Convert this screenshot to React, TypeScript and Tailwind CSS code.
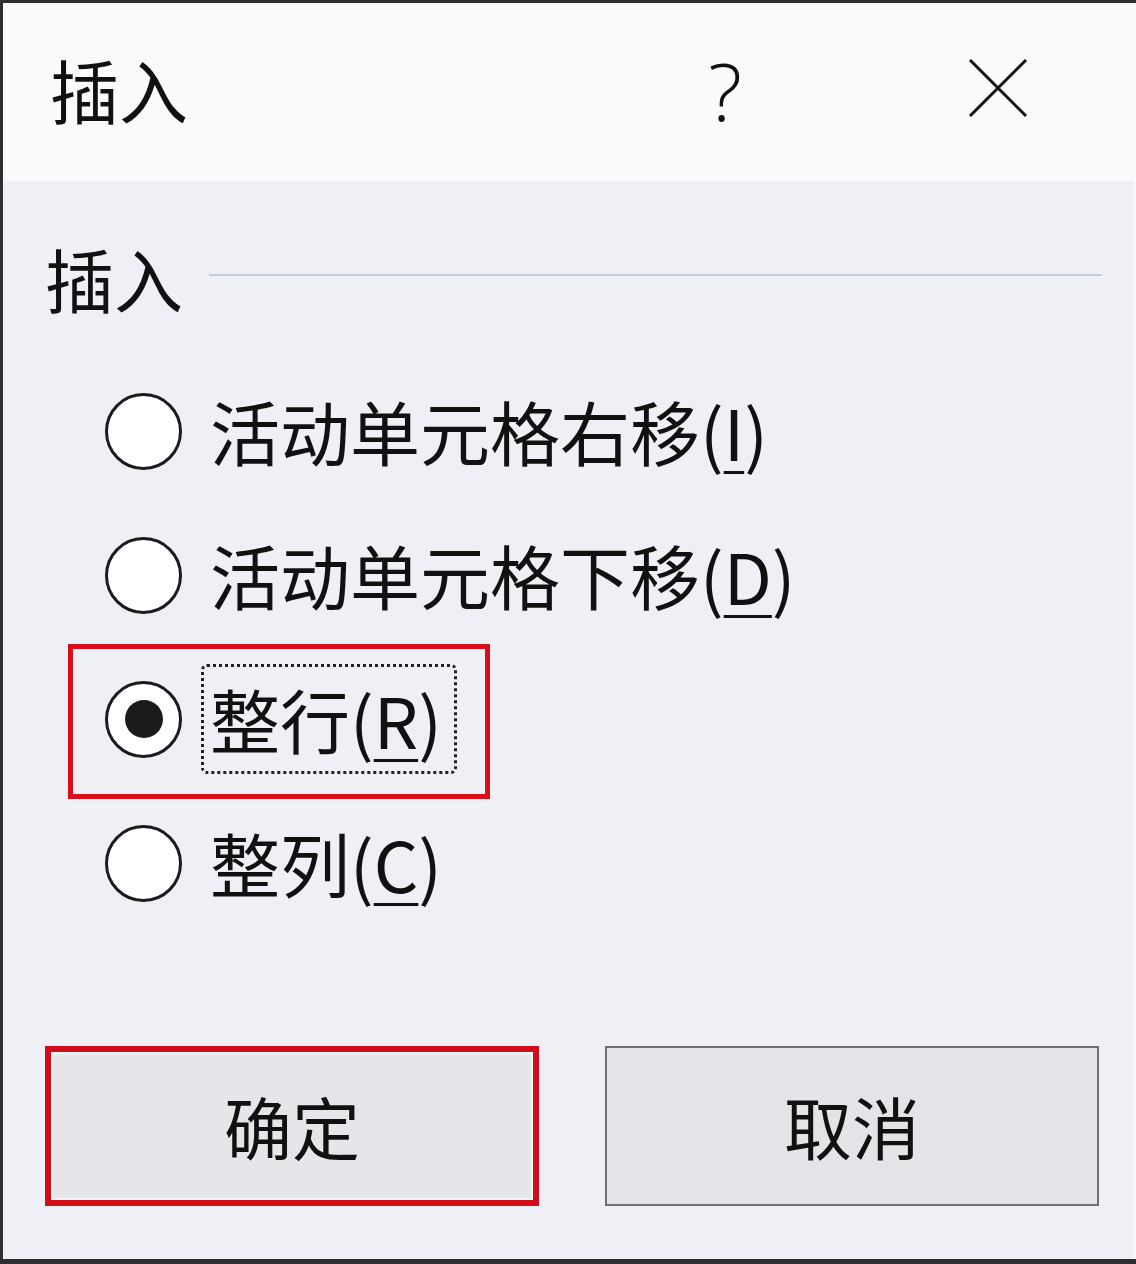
import React from 'react';

const font = { fontFamily: '"Noto Sans CJK SC", "Noto Sans", sans-serif' };

type Opt = { label: string; key: string; checked?: boolean; focused?: boolean };

const options: Opt[] = [
  { label: '活动单元格右移', key: 'I' },
  { label: '活动单元格下移', key: 'D' },
  { label: '整行', key: 'R', checked: true, focused: true },
  { label: '整列', key: 'C' },
];

function Radio({ checked }: { checked?: boolean }) {
  return (
    <div className="w-[77px] h-[77px] rounded-full border-[3px] border-[#1b1b1b] bg-white flex items-center justify-center shrink-0">
      {checked && <div className="w-[38px] h-[38px] rounded-full bg-[#1b1b1b]" />}
    </div>
  );
}

function OptionRow({ opt }: { opt: Opt }) {
  const label = (
    <span className="text-[70px] leading-none text-[#111]">
      {opt.label}(<span className="underline decoration-[3px] underline-offset-[10px]">{opt.key}</span>)
    </span>
  );
  return (
    <div className="relative h-[144px] flex items-center pl-[102px]">
      {opt.focused && (
        <div className="absolute left-[65px] top-[-3px] w-[422px] h-[155px] border-[5px] border-[#dc0d1a] pointer-events-none" />
      )}
      <Radio checked={opt.checked} />
      {opt.focused ? (
        <div className="ml-[19px] h-[110px] pl-[6px] pr-[12px] flex items-center border-[3px] border-dotted border-[#222] rounded-[6px]">
          {label}
        </div>
      ) : (
        <div className="ml-[28px]">{label}</div>
      )}
    </div>
  );
}

export default function App() {
  return (
    <div style={font} className="w-[1136px] h-[1264px] bg-[#2e2e30] pt-[3px] pb-[5px] pl-[3px] flex flex-col overflow-hidden">
      {/* Title bar */}
      <div className="h-[178px] bg-[#f9fafc] flex items-center shrink-0">
        <div className="ml-[47px] -mt-[6px] text-[69px] leading-none text-[#111]">插入</div>
        <div className="flex-1" />
        <div className="mr-[226px] -mt-[4px] text-[80px] leading-none font-light text-[#111]" style={{ fontFamily: '"Open Sans", sans-serif' }}>?</div>
        <svg width="60" height="60" viewBox="0 0 60 60" className="mr-[108px] -mt-[8px]">
          <path d="M2 2 L58 58 M58 2 L2 58" stroke="#111" strokeWidth="3" fill="none" />
        </svg>
      </div>

      {/* Body */}
      <div className="flex-1 bg-[#eef0f5] border-r-[3px] border-[#f7f8fa] flex flex-col">
        <div className="mt-[62px] h-[70px] flex items-center pl-[42px]">
          <div className="text-[69px] leading-none text-[#111]">插入</div>
          <div className="ml-[26px] mr-[31px] flex-1 h-[2px] bg-[#c5ced8] -mt-[6px]" />
        </div>

        <div className="mt-[46px] flex flex-col">
          {options.map((o) => (
            <OptionRow key={o.key} opt={o} />
          ))}
        </div>

        <div className="mt-[111px] flex pl-[42px] gap-[66px]">
          <button className="w-[494px] h-[160px] border-[6px] border-[#d20d1a] bg-[#e4e6ea] flex items-center justify-center">
            <div className="w-full h-full border-2 border-[#f4f5f7] flex items-center justify-center text-[68px] leading-none text-[#111]">确定</div>
          </button>
          <button className="w-[494px] h-[160px] border-2 border-[#6e6f72] bg-[#e2e4e8] flex items-center justify-center text-[68px] leading-none text-[#111]">
            取消
          </button>
        </div>
      </div>
    </div>
  );
}
